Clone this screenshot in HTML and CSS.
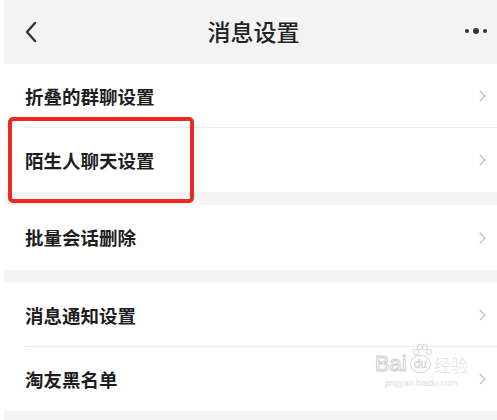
FILE: index.html
```html
<!DOCTYPE html>
<html lang="zh">
<head>
    <meta charset="UTF-8">
    <meta name="viewport" content="width=device-width, initial-scale=1.0">
    <title>消息设置</title>
    <link rel="stylesheet" href="styles.css">
</head>
<body>

    <div class="screen">
        <!-- Barra superior -->
        <div class="topbar">
            <svg class="back" width="14" height="22" viewBox="0 0 14 22">
                <path d="M11 2 L3 11 L11 20" fill="none" stroke="#333" stroke-width="2.4" stroke-linecap="round" stroke-linejoin="round"/>
            </svg>
            <h1 class="title">消息设置</h1>
            <div class="more">
                <span class="dot"></span>
                <span class="dot big"></span>
                <span class="dot"></span>
            </div>
        </div>

        <!-- Grupo 1 -->
        <div class="group">
            <div class="row">
                <span class="label">折叠的群聊设置</span>
                <span class="arrow"></span>
            </div>
            <div class="row marked">
                <span class="label">陌生人聊天设置</span>
                <span class="arrow"></span>
                <div class="highlight"></div>
            </div>
        </div>

        <!-- Grupo 2 -->
        <div class="group">
            <div class="row tall">
                <span class="label">批量会话删除</span>
                <span class="arrow"></span>
            </div>
        </div>

        <!-- Grupo 3 -->
        <div class="group">
            <div class="row">
                <span class="label">消息通知设置</span>
                <span class="arrow"></span>
            </div>
            <div class="row">
                <span class="label">淘友黑名单</span>
                <span class="arrow"></span>
                <div class="watermark">
                    <svg class="paw" width="22" height="14" viewBox="0 0 22 14">
                        <g fill="none" stroke="#d4d4d4" stroke-width="1">
                            <ellipse cx="5" cy="9" rx="2.5" ry="3"/>
                            <ellipse cx="9" cy="4" rx="2.5" ry="3"/>
                            <ellipse cx="14" cy="4" rx="2.5" ry="3"/>
                            <ellipse cx="18" cy="9" rx="2.5" ry="3"/>
                        </g>
                    </svg>
                    <span class="wm-logo">Bai<span class="wm-du">du</span><span class="wm-cn">经验</span></span>
                    <span class="wm-url">jingyan.baidu.com</span>
                </div>
            </div>
        </div>
    </div>

</body>
</html>
```

FILE: styles.css
```css
* {
    margin: 0;
    padding: 0;
    box-sizing: border-box;
}

html, body {
    height: 100%;
    background: #fff;
    font-family: "Noto Sans CJK SC", "Noto Sans", sans-serif;
    overflow: hidden;
}

body {
    padding-left: 4px;
}

/* Contenedor principal */
.screen {
    height: 100%;
    background: #f4f4f4;
    display: flex;
    flex-direction: column;
}

/* Barra superior */
.topbar {
    height: 64px;
    display: flex;
    align-items: center;
    padding: 0 10px 0 20px;
    background: #f3f3f3;
}

.back {
    margin-top: -1px;
}

.title {
    flex: 1;
    text-align: center;
    font-size: 23px;
    font-weight: 500;
    color: #222;
    margin-left: 4px;
    margin-top: -2px;
}

.more {
    display: flex;
    align-items: center;
    gap: 4px;
    margin-top: -2px;
}

.dot {
    width: 4px;
    height: 4px;
    border-radius: 50%;
    background: #333;
}

.dot.big {
    width: 6px;
    height: 6px;
}

/* Grupos de filas */
.group {
    background: #fff;
    margin-bottom: 13px;
}

.group:last-child {
    margin-bottom: 0;
}

.row {
    height: 64px;
    display: flex;
    align-items: center;
    justify-content: space-between;
    padding: 0 13px 0 21px;
    position: relative;
}

.row.tall {
    height: 65px;
}

.row + .row::before {
    content: "";
    position: absolute;
    top: -1px;
    left: 21px;
    right: 0;
    height: 1px;
    background: #ebebeb;
}

.label {
    font-size: 18.5px;
    font-weight: 600;
    color: #1e1e1e;
    margin-top: -1px;
}

.arrow {
    width: 8px;
    height: 8px;
    border-top: 1.3px solid #b5b5b5;
    border-right: 1.3px solid #b5b5b5;
    transform: rotate(45deg);
}

/* Recuadro rojo */
.highlight {
    position: absolute;
    left: 4px;
    top: -11px;
    width: 186px;
    height: 86px;
    border: 4.5px solid #ea2a23;
    border-radius: 5px;
}

/* Marca de agua */
.watermark {
    position: absolute;
    right: 29px;
    top: -4px;
    display: flex;
    flex-direction: column;
    align-items: center;
    line-height: 1;
}

.paw {
    margin-left: 2px;
    margin-bottom: -4px;
}

.wm-logo {
    font-family: "Liberation Sans", "Noto Sans CJK SC", sans-serif;
    font-size: 22px;
    font-weight: 400;
    color: #fff;
    -webkit-text-stroke: 1px #cfcfcf;
    display: flex;
    align-items: center;
}

.wm-du {
    font-size: 12px;
    border: 1px solid #d4d4d4;
    border-radius: 50%;
    padding: 2px 3px;
    margin: 0 3px;
    -webkit-text-stroke: 0.6px #cfcfcf;
}

.wm-cn {
    font-family: "Noto Sans CJK SC", sans-serif;
    font-size: 17px;
    font-weight: 300;
    color: #e2e2e2;
    -webkit-text-stroke: 0;
}

.wm-url {
    font-family: "Liberation Sans", sans-serif;
    font-size: 9px;
    color: #dcdcdc;
    margin-top: 4px;
}
```
